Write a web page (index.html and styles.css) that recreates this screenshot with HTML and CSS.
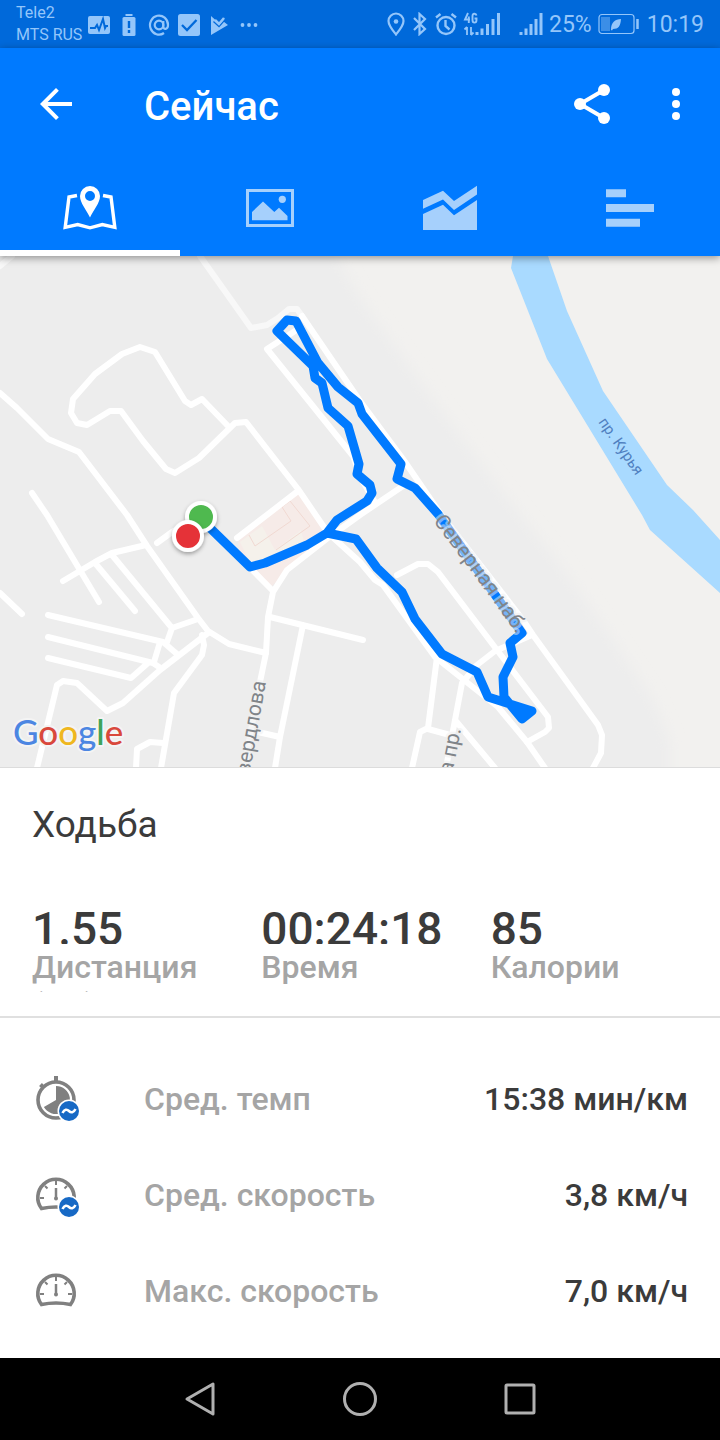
FILE: index.html
```html
<!DOCTYPE html>
<html lang="ru">
<head>
<meta charset="utf-8">
<meta name="viewport" content="width=device-width, initial-scale=1">
<title>Сейчас</title>
<link rel="stylesheet" href="styles.css">
</head>
<body>
<div class="screen">
  <div class="status">
    <div class="carriers"><span>Tele2</span><span>MTS RUS</span></div>
    <div class="notices">
      <svg class="s-icon" viewBox="0 0 22 22"><rect y="2" width="22" height="18" rx="2" fill="currentColor"/><path d="M2 14h5l2-3 2 5 4-11 2 9 1-2h2" fill="none" stroke="#0069da" stroke-width="2"/></svg>
      <svg class="s-icon" viewBox="0 0 22 22"><rect x="4.500" y="3" width="13" height="19" rx="1.500" fill="currentColor"/><path d="M7.500 1h7" stroke="currentColor" stroke-width="2"/><path d="M11 7v7M11 16v3" stroke="#0069da" stroke-width="2.400"/></svg>
      <svg class="s-icon" viewBox="0 0 22 22" fill="none" stroke="currentColor" stroke-width="2.200"><circle cx="11" cy="11" r="4.300"/><path d="M15.300 7v5.500c0 3.500 4.700 3.200 4.700-1.500a9 9.500 0 1 0-4 8"/></svg>
      <svg class="s-icon" viewBox="0 0 22 22"><rect width="22" height="22" rx="2.500" fill="currentColor"/><path d="M4 11l5 5 9.500-10" fill="none" stroke="#0069da" stroke-width="2.300"/></svg>
      <svg class="s-icon" viewBox="0 0 22 22"><path d="M3 2l5 4.500L11 9l5.500-5.500-1 4L20 11 3 21z" fill="currentColor"/><path d="M5.500 7.500l5.500 5 7-8" fill="none" stroke="#0069da" stroke-width="1.500"/><path d="M7 6l4 4 5-6" fill="none" stroke="currentColor" stroke-width="2.500"/></svg>
      <svg class="s-icon" viewBox="0 0 22 22" fill="currentColor"><circle cx="4.500" cy="11" r="1.900"/><circle cx="11" cy="11" r="1.900"/><circle cx="17.500" cy="11" r="1.900"/></svg>
    </div>
    <div class="system">
      <svg width="18" height="24" viewBox="0 0 18 24"><path d="M9 22.500C5 17.500 1.500 13.500 1.500 9a7.500 7.500 0 0 1 15 0c0 4.500-3.500 8.500-7.500 13.500z" fill="none" stroke="currentColor" stroke-width="2.200"/><circle cx="9" cy="9.500" r="2.300" fill="currentColor"/></svg>
      <svg width="18" height="24" viewBox="0 0 18 24"><path d="M3 6l11 11-5.500 5V2L14 7 3 18" fill="none" stroke="currentColor" stroke-width="2.200"/></svg>
      <svg width="22" height="24" viewBox="0 0 22 24" fill="none" stroke="currentColor" stroke-width="2.400"><circle cx="11" cy="13.500" r="8.500"/><path d="M10.500 8v6l4 3.500M1 5.500L5.500 2M21 5.500L16.500 2"/></svg>
      <svg class="net" width="38" height="24" viewBox="0 0 38 24"><path d="M5 1L2 7.500h5M5.800 4.500V11M13.500 3.500C13 1 9.500 1 9.500 4v4c0 3.500 4 3.500 4 0V6.500h-2" fill="none" stroke="currentColor" stroke-width="1.900"/><path d="M4 15v8M1.500 17.500L4 15M8 15v8M8 23l2.500-2.500" fill="none" stroke="currentColor" stroke-width="1.800"/><path d="M14 20v3M19 16.500V23M24.500 12v11M30 7v16M35.500 1v22" stroke="currentColor" stroke-width="3"/></svg>
      <svg width="24" height="24" viewBox="0 0 24 24"><path d="M2 20v3M7 16.500V23M12 12v11M17 7v16M22 1v22" stroke="currentColor" stroke-width="3"/></svg>
      <span>25%</span>
      <svg class="battery" width="41" height="22" viewBox="0 0 41 22"><rect x="1" y="1.500" width="35" height="19" rx="3" fill="none" stroke="currentColor" stroke-width="1.200"/><rect x="3" y="4" width="9" height="14" fill="currentColor" opacity=".4"/><path d="M13 17c0-8 4-10.500 10-11-.5 7-2.500 10-8 10l-1 1.500z" fill="currentColor"/><path d="M39.500 6v10" stroke="currentColor" stroke-width="2.500"/></svg>
      <span>10:19</span>
    </div>
  </div>

  <header class="header">
    <div class="toolbar">
      <button class="tool" aria-label="Назад"><svg viewBox="0 0 24 24" fill="currentColor"><path d="M20 11H7.830l5.590-5.590L12 4l-8 8 8 8 1.410-1.410L7.830 13H20z"/></svg></button>
      <h1 class="title">Сейчас</h1>
      <button class="tool" aria-label="Поделиться"><svg viewBox="0 0 24 24" fill="currentColor"><path d="M18 5L6 12l12 7" fill="none" stroke="currentColor" stroke-width="2"/><circle cx="18" cy="5" r="3"/><circle cx="6" cy="12" r="3"/><circle cx="18" cy="19" r="3"/></svg></button>
      <button class="tool" aria-label="Ещё"><svg viewBox="0 0 24 24" fill="currentColor"><circle cx="12" cy="6" r="2"/><circle cx="12" cy="12" r="2"/><circle cx="12" cy="18" r="2"/></svg></button>
    </div>
    <nav class="tabs" role="tablist">
      <button class="tab tab-active" role="tab" aria-selected="true" aria-label="Карта"><svg viewBox="60 178 60 60"><path d="M77 195.500l-8 1.500-3.800 30.300 12.500-2.800 12.300 3.300 12.300-3.300 12.500 2.800L111 197l-8-1.500" fill="none" stroke="currentColor" stroke-width="3.400"/><path fill-rule="evenodd" d="M90 186a10 10 0 0 0-10 10c0 7 6.500 14 10 21.500 3.500-7.500 10-14.500 10-21.500a10 10 0 0 0-10-10zm0 5a5 5 0 1 1 0 10 5 5 0 0 1 0-10z" fill="currentColor"/></svg></button>
      <button class="tab" role="tab" aria-selected="false" aria-label="Фото"><svg viewBox="240 178 60 60" fill="currentColor"><rect x="247.500" y="190.500" width="45" height="35" fill="none" stroke="currentColor" stroke-width="3"/><circle cx="282.300" cy="199.300" r="3.600"/><path d="M252 212l11-10.500 11.300 10.500 4.700-4.300 8.500 8.300v4.300H252z"/></svg></button>
      <button class="tab" role="tab" aria-selected="false" aria-label="График"><svg viewBox="420 178 60 60" fill="currentColor"><path d="M423 200l20-9.300L454 201l23-15.300v8.700L454 210l-11-10.600-20 9.300zM423 214l20-9.300 11 10.600L477 200v30h-54z"/></svg></button>
      <button class="tab" role="tab" aria-selected="false" aria-label="Показатели"><svg viewBox="600 178 60 60" fill="currentColor"><path d="M606 189.300h20v8h-20zM606 204h48v8h-48zM606 218.700h34v8h-34z"/></svg></button>
    </nav>
  </header>

  <main class="content">
    <svg class="map" viewBox="0 256 720 512" role="img" aria-label="Маршрут на карте">
      <defs>
        <path id="street" d="M433 521L479 582L521 640"/>
        <filter id="pinShadow" x="-50%" y="-50%" width="200%" height="200%"><feDropShadow dx="0" dy="2" stdDeviation="2" flood-opacity=".35"/></filter>
        <filter id="landFade"><feGaussianBlur stdDeviation="7"/></filter>
      </defs>
      <path d="M0 256h720v512H0z" fill="#f2f1ef"/>
      <path d="M-40 216h355l45 82 70 97 70 94 60 75 60 86 33 50 17 40v68H-40z" fill="#ededed" filter="url(#landFade)"/>
      <path d="M513 256L511 268 547 359 642 515 650 530 720 593V540L693 510 667 485 603 391 567 311 548 256z" fill="#a9daff"/>
      <path d="M238 540L298 494 327 532 268 590 240 560z" fill="#f6ebe8"/>
      <path d="M240 542L262 526 275 550 301 530 305 545 252 566z" fill="#f5f1eb"/>
      <path d="M249 535l6 11 36-25-9-14 8-6 20 25-34 24" fill="none" stroke="#f1d9d2"/>
      <g class="roads">
        <path class="road-faint" d="M0 266L12 256M200 256L251 328 267 325 278 318 289 309H297L302 316"/>
        <path d="M0 393L17 408 48 439 79 452 127 515 147 546 198 618 208 631 229 644 266 653"/>
        <path d="M228 426L202 399 191 405 185 401 155 352 140 347 122 354 95 374 73 399 71 413 77 423 87 425 110 411H121L143 441 166 469 175 473 199 458 235 423 246 422 298 489 328 533 360 562 375 580 383 585 435 657 498 707 527 742 545 768"/>
        <path d="M32 493L47 515 99 602M63 581L95 562 112 553 146 545M95 563L135 611M112 555L172 628 198 619M172 628L167 642"/>
        <path d="M48 615L163 642 177 654M48 637L153 663 159 667M160 642L154 662M48 658L131 678 148 663"/>
        <path d="M208 633L160 670 123 703 107 711 77 683 63 681 57 685 37 768M202 635L204 645 202 655 174 693 161 768M163 743L150 742 137 749 136 768"/>
        <path d="M0 593L22 614M157 543L172 532 200 517M213 530L272 590M298 491L237 538"/>
        <path d="M302 316L360 401 403 459 440 513 523 620 533 635 598 725 602 735 601 753 593 768M295 331L267 349 353 456 362 480 376 504M403 486L360 515 328 538 287 570 273 592 268 617 266 653 260 682 244 768"/>
        <path d="M270 617L363 640M303 625L280 737 275 768M258 732L280 737"/>
        <path d="M397 575L418 564H428L438 572 497 650 548 717 549 728 545 732 527 742M532 635L495 651 477 665 462 683 455 720 446 768M437 657L428 728 420 732 412 768M428 729L450 735M455 720L495 768"/>
      </g>
      <path class="route" d="M208 526L250 567 265 563 307 545 327 533 337 520 367 501 372 493 370 485 357 474 359 464 348 426 328 408 322 383 315 378 313 366 277 331 287 320 296 321 318 363 338 387 358 403 362 414 401 464 397 479 415 488 438 514 522 633 510 643 513 657 503 677 504 697 522 719 532 711 488 697 477 672 442 654 415 619 402 592 377 568 356 539 327 533"/>
      <g filter="url(#pinShadow)"><circle cx="201" cy="517" r="14" fill="#4fb94f" stroke="#fff" stroke-width="4"/></g>
      <g filter="url(#pinShadow)"><circle cx="188" cy="536" r="14" fill="#e53238" stroke="#fff" stroke-width="4"/></g>
      <text class="street-name"><textPath href="#street">Северная наб.</textPath></text>
      <text class="street-name" text-anchor="end" transform="translate(266 682) rotate(-80)">вердлова</text>
      <text class="street-name" text-anchor="end" transform="translate(461 729) rotate(-79)">а пр.</text>
      <text class="river-name" transform="translate(598 422) rotate(55)">пр. Курья</text>
      <text class="map-brand" x="13" y="745"><tspan fill="#4c86e2">G</tspan><tspan fill="#d9483c">o</tspan><tspan fill="#efb71f">o</tspan><tspan fill="#4c86e2">g</tspan><tspan fill="#3fa35a">l</tspan><tspan fill="#d9483c">e</tspan></text>
      <path d="M0 767.500h720" stroke="#dcdcdc"/>
    </svg>

    <section class="summary">
      <h2 class="activity">Ходьба</h2>
      <dl class="stats">
        <div class="stat"><dd class="stat-value">1.55</dd><dt class="stat-label">Дистанция (км)</dt></div>
        <div class="stat"><dd class="stat-value">00:24:18</dd><dt class="stat-label">Время</dt></div>
        <div class="stat"><dd class="stat-value">85</dd><dt class="stat-label">Калории</dt></div>
      </dl>
    </section>

    <dl class="details">
      <div class="detail">
        <svg class="d-icon" viewBox="0 0 48 48"><circle cx="24" cy="25" r="18" fill="none" stroke="#808080" stroke-width="3.600"/><path d="M24 1v5M8.500 9.500l3 3" stroke="#808080" stroke-width="4"/><path d="M24 25V11a14 14 0 1 1-12.100 21z" fill="#808080"/><circle cx="37" cy="36" r="11.500" fill="#fff"/><circle cx="37" cy="36" r="10" fill="#1769c5"/><path d="M30.500 38c2-4 4.500-4 6.500-2s4.500 2 6.500-2" fill="none" stroke="#fff" stroke-width="2.600"/></svg>
        <dt>Сред. темп</dt><dd>15:38 мин/км</dd>
      </div>
      <div class="detail">
        <svg class="d-icon" viewBox="0 0 48 48"><path d="M9.500 37.500a18.200 18.200 0 1 1 29 0q-14.500-3-29 0z" fill="none" stroke="#808080" stroke-width="3.600"/><path d="M24 10v4M13 15l2.500 2.500M35 15l-2.500 2.500M8 27h4M40 27h-4" stroke="#808080" stroke-width="2"/><path d="M24 17v10" stroke="#808080" stroke-width="2.500"/><circle cx="24" cy="27.500" r="2" fill="#808080"/><circle cx="37" cy="36" r="11.500" fill="#fff"/><circle cx="37" cy="36" r="10" fill="#1769c5"/><path d="M30.500 38c2-4 4.500-4 6.500-2s4.500 2 6.500-2" fill="none" stroke="#fff" stroke-width="2.600"/></svg>
        <dt>Сред. скорость</dt><dd>3,8 км/ч</dd>
      </div>
      <div class="detail">
        <svg class="d-icon" viewBox="0 0 48 48"><path d="M9.500 37.500a18.200 18.200 0 1 1 29 0q-14.500-3-29 0z" fill="none" stroke="#808080" stroke-width="3.600"/><path d="M24 10v4M13 15l2.500 2.500M35 15l-2.500 2.500M8 27h4M40 27h-4" stroke="#808080" stroke-width="2"/><path d="M24 17v10" stroke="#808080" stroke-width="2.500"/><circle cx="24" cy="27.500" r="2" fill="#808080"/></svg>
        <dt>Макс. скорость</dt><dd>7,0 км/ч</dd>
      </div>
    </dl>
  </main>

  <nav class="navbar">
    <button class="nav-btn" aria-label="Назад"><svg viewBox="0 0 40 40"><path d="M33 5v30L7 20z"/></svg></button>
    <button class="nav-btn" aria-label="Домой"><svg viewBox="0 0 40 40"><circle cx="20" cy="20" r="15.500"/></svg></button>
    <button class="nav-btn" aria-label="Недавние"><svg viewBox="0 0 40 40"><rect x="6" y="6" width="28" height="28" rx="1"/></svg></button>
  </nav>
</div>
</body>
</html>
```

FILE: styles.css
```css
* { box-sizing: border-box; }
body { margin: 0; background: #fff; color: #3b3b3b; font-family: Roboto, "Noto Sans", sans-serif; }
button { margin: 0; padding: 0; border: 0; background: none; color: inherit; font: inherit; cursor: pointer; }
h1, h2, dl, dt, dd { margin: 0; }
svg { display: block; flex: none; }

.screen { display: flex; flex-direction: column; min-height: 100vh; }

.status { display: flex; align-items: center; height: 48px; padding: 0 16px; background: #0069da; color: #94c6fa; font-size: 23px; }
.carriers { display: flex; flex-direction: column; width: 72px; font-size: 16px; line-height: 22px; }
.notices { display: flex; gap: 8px; padding-top: 2px; }
.s-icon { width: 22px; height: 22px; }
.system { display: flex; align-items: center; gap: 6px; margin-left: auto; }
.net { margin-right: 12px; }
.battery { margin-right: 2px; }

.header { position: relative; z-index: 1; background: #007aff; color: #fff; box-shadow: 0 2px 8px rgba(0, 0, 0, .4); }
.toolbar { display: flex; align-items: center; gap: 36px; height: 112px; padding: 0 20px 0 32px; }
.tool { width: 48px; height: 48px; }
.title { flex: 1; padding: 6px 0 0 28px; font-size: 40px; line-height: 48px; font-weight: 500; }
.tabs { display: grid; grid-template-columns: repeat(4, 1fr); height: 96px; }
.tab { display: flex; align-items: center; justify-content: center; border-top: 6px solid transparent; border-bottom: 6px solid transparent; color: #a6d0fc; }
.tab svg { width: 60px; height: 60px; }
.tab-active { border-bottom-color: #fff; color: #fff; }

.content { flex: 1; }
.map { width: 100%; height: auto; }
.roads path { fill: none; stroke: #fff; stroke-width: 6; stroke-linecap: round; stroke-linejoin: round; }
.roads .road-faint { stroke: #f8f8f8; }
.route { fill: none; stroke: #007aff; stroke-width: 9; stroke-linejoin: round; }
.street-name, .river-name { font-family: Roboto, sans-serif; }
.street-name { font-size: 21px; fill: #808489; stroke: rgba(237, 237, 237, .5); stroke-width: 5px; stroke-linejoin: round; paint-order: stroke; }
.river-name { font-size: 15px; fill: #4f7fc0; }
.map-brand { font-family: Lato, sans-serif; font-size: 35px; font-weight: 500; stroke: #f4f4f4; stroke-width: 4px; stroke-linejoin: round; paint-order: stroke; }

.summary { padding: 33px 0 24px 32px; border-bottom: 2px solid #e0e0e0; }
.activity { font-size: 37px; line-height: 48px; font-weight: 400; }
.stats { display: grid; grid-template-columns: repeat(3, 1fr); margin-top: 55px; }
.stat-value { height: 40px; overflow: hidden; font-size: 46px; line-height: 50px; font-weight: 500; }
.stat-label { height: 48px; padding-top: 4px; padding-right: 24px; overflow: hidden; font-size: 32px; line-height: 38px; font-weight: 500; color: #a5a5a5; }

.details { padding: 33px 32px 16px; }
.detail { display: flex; align-items: center; height: 96px; font-size: 32px; font-weight: 500; }
.d-icon { width: 48px; height: 48px; margin-right: 64px; }
.detail dt { flex: 1; color: #a5a5a5; }

.navbar { display: flex; align-items: center; justify-content: center; gap: 120px; height: 82px; background: #000; }
.nav-btn svg { width: 40px; height: 40px; fill: none; stroke: #b0b0b0; stroke-width: 3; stroke-linejoin: round; }
```
